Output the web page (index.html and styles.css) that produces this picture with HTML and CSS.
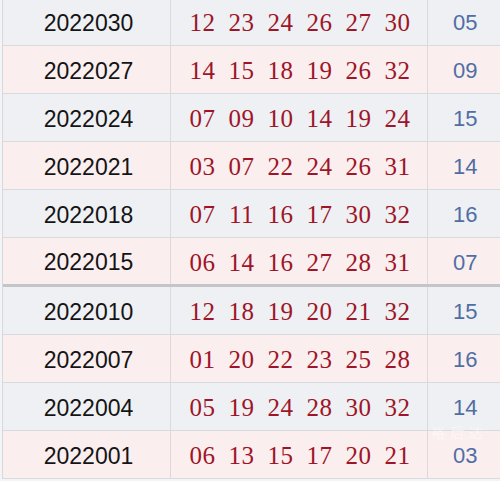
FILE: index.html
```html
<!DOCTYPE html>
<html lang="zh">
<head>
<meta charset="utf-8">
<title>开奖号码</title>
<link rel="stylesheet" href="styles.css">
</head>
<body>
<div class="table">
  <div class="row gray"><div class="c date">2022030</div><div class="c reds"><span>12</span><span>23</span><span>24</span><span>26</span><span>27</span><span>30</span></div><div class="c blue">05</div></div>
  <div class="row pink"><div class="c date">2022027</div><div class="c reds"><span>14</span><span>15</span><span>18</span><span>19</span><span>26</span><span>32</span></div><div class="c blue">09</div></div>
  <div class="row gray"><div class="c date">2022024</div><div class="c reds"><span>07</span><span>09</span><span>10</span><span>14</span><span>19</span><span>24</span></div><div class="c blue">15</div></div>
  <div class="row pink"><div class="c date">2022021</div><div class="c reds"><span>03</span><span>07</span><span>22</span><span>24</span><span>26</span><span>31</span></div><div class="c blue">14</div></div>
  <div class="row gray"><div class="c date">2022018</div><div class="c reds"><span>07</span><span>11</span><span>16</span><span>17</span><span>30</span><span>32</span></div><div class="c blue">16</div></div>
  <div class="row pink sep"><div class="c date">2022015</div><div class="c reds"><span>06</span><span>14</span><span>16</span><span>27</span><span>28</span><span>31</span></div><div class="c blue">07</div></div>
  <div class="row gray"><div class="c date">2022010</div><div class="c reds"><span>12</span><span>18</span><span>19</span><span>20</span><span>21</span><span>32</span></div><div class="c blue">15</div></div>
  <div class="row pink"><div class="c date">2022007</div><div class="c reds"><span>01</span><span>20</span><span>22</span><span>23</span><span>25</span><span>28</span></div><div class="c blue">16</div></div>
  <div class="row gray"><div class="c date">2022004</div><div class="c reds"><span>05</span><span>19</span><span>24</span><span>28</span><span>30</span><span>32</span></div><div class="c blue">14</div></div>
  <div class="row pink"><div class="c date">2022001</div><div class="c reds"><span>06</span><span>13</span><span>15</span><span>17</span><span>20</span><span>21</span></div><div class="c blue">03</div></div>
</div>
<div class="watermark">裕后达</div>
</body>
</html>
```
FILE: styles.css
```css
html, body {
  margin: 0;
  padding: 0;
}
body {
  width: 500px;
  height: 481px;
  overflow: hidden;
  background: #f3f4f6;
  position: relative;
}
.table {
  margin-top: -2px;
  width: 520px;
  border-left: 1px solid #d6d8dc;
  margin-left: 2px;
}
.row {
  display: grid;
  grid-template-columns: 168px 257px 1fr;
  height: 47px;
  border-bottom: 1px solid #d8dadd;
}
.row.sep {
  height: 46px;
  border-bottom: 3px solid #c3c5c8;
}
.gray { background: #eef0f3; }
.pink { background: #fbeeef; }
.c {
  display: flex;
  align-items: center;
  justify-content: center;
  padding-top: 3px;
  border-right: 1px solid #d8dadd;
}
.date {
  font-family: "Liberation Sans", Arial, sans-serif;
  font-size: 23px;
  color: #141414;
  padding-left: 4px;
}
.reds {
  gap: 13px;
  font-family: "Liberation Serif", "Times New Roman", serif;
  font-size: 25px;
  color: #9e1528;
  padding-left: 2px;
}
.reds span {
  width: 26px;
  text-align: center;
  letter-spacing: 0.5px;
}
.blue {
  justify-content: flex-start;
  padding-left: 25px;
  font-family: "Liberation Sans", Arial, sans-serif;
  font-size: 22px;
  line-height: 24px;
  color: #4f6ea3;
  border-right: none;
}
.watermark {
  position: absolute;
  left: 431px;
  top: 425px;
  font-family: "Noto Sans CJK SC", sans-serif;
  font-size: 14px;
  line-height: 15px;
  color: rgba(255, 255, 255, 0.55);
  letter-spacing: 5px;
}
```
